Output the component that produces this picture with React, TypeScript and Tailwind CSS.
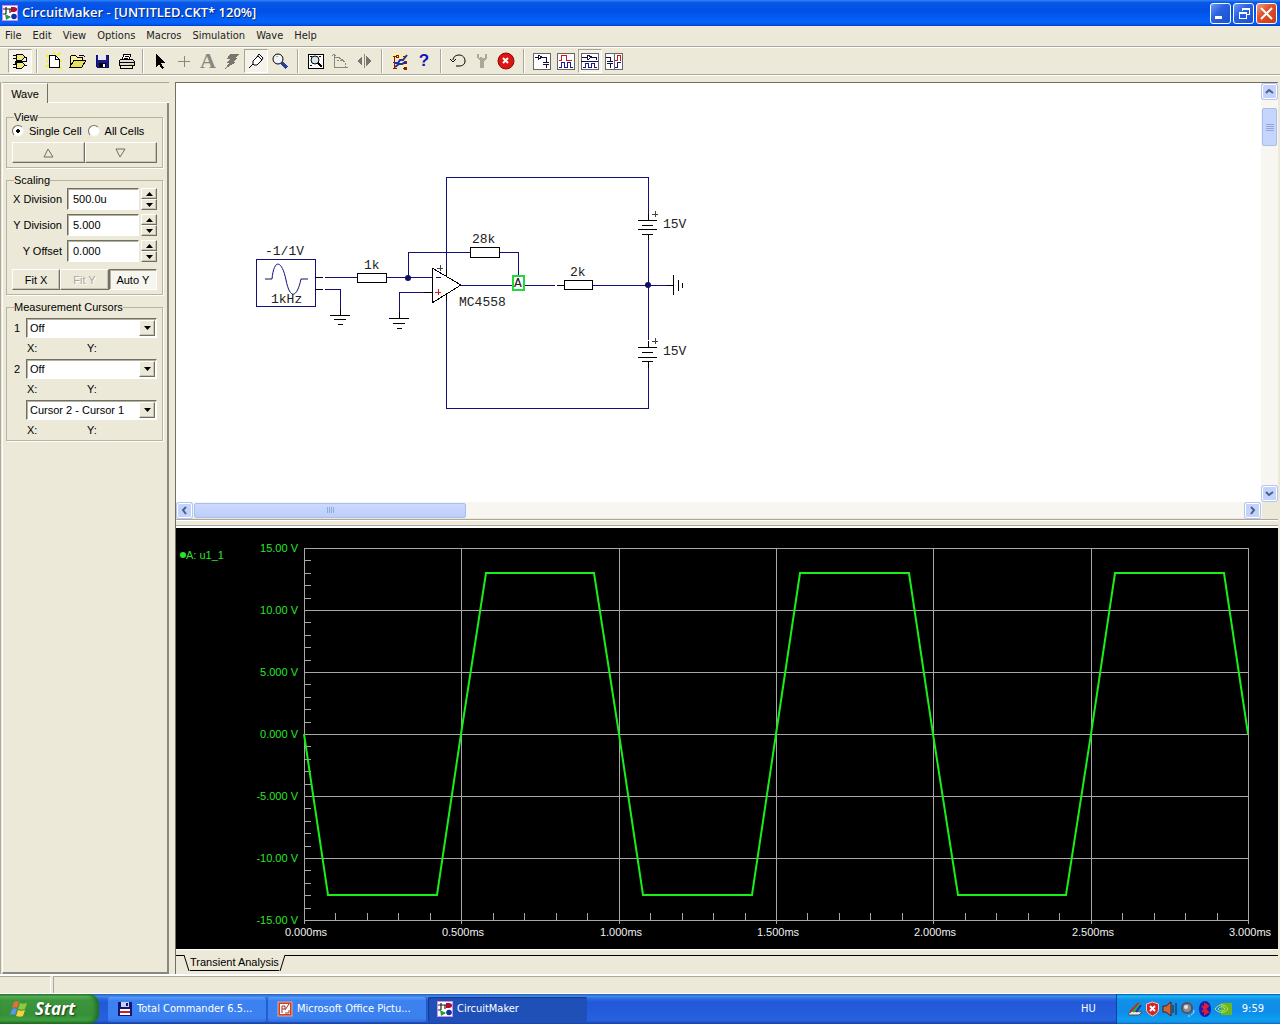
import type { ReactNode } from 'react';

const MENUS = ['File', 'Edit', 'View', 'Options', 'Macros', 'Simulation', 'Wave', 'Help'];

function Pic({ children, size = 18 }: { children: ReactNode; size?: number }) {
  return (
    <svg width={size} height={size} viewBox="0 0 18 18" fill="none" stroke="#000" shapeRendering="crispEdges" className="shrink-0">
      {children}
    </svg>
  );
}

function AppIcon() {
  return (
    <svg width="16" height="16" viewBox="0 0 16 16" fill="none" className="shrink-0">
      <rect width="16" height="16" fill="#fff" />
      <rect x="0.5" y="0.5" width="15" height="15" stroke="#d58be8" />
      <path d="M1 4h9M4 2v7M1 9h3M8 4v4M4 12h4M12 4h3" stroke="#222" strokeWidth="1.2" />
      <path d="M9 2h3c2 0 3 1 3 2.500s-1 2.500-3 2.500H9z" fill="#b01030" />
      <circle cx="12" cy="11.500" r="2.800" fill="#1430a8" />
      <path d="M3 9l6 3-5 3z" fill="#2a9a40" />
    </svg>
  );
}

const ICONS: Record<string, ReactNode> = {
  gates: (
    <Pic>
      <path d="M2 3h3M2 6h3M13 5h3M2 12h3M2 15h3M13 13h3M15 5v4M4 9h12M4 9v3" />
      <path d="M5 2h6l3 3-3 3H5zM5 10h6l3 3-3 3H5z" fill="#f0e978" />
    </Pic>
  ),
  blank: (
    <Pic>
      <path d="M1 3l3 2M15 1l-3 3M1 15l3-2M17 9h-3M1 9h2M9 0v2M14 15l3 2" stroke="#f5ee3c" strokeWidth="2" />
      <path d="M4 3h6l4 4v8H4z" fill="#fff" />
      <path d="M10 3v4h4" />
    </Pic>
  ),
  open: (
    <Pic>
      <path d="M1 15V5l2-2h3l2 2h5v3" fill="#f7f29a" />
      <path d="M1 15L5 8h12l-4 7z" fill="#e8df5c" />
      <path d="M10 3h4l2 2" />
    </Pic>
  ),
  save: (
    <Pic>
      <path d="M3 3h12v12H4l-1-1z" fill="#1a1a8c" stroke="#10106c" />
      <rect x="5" y="3" width="8" height="5" fill="#e8e8f0" stroke="none" />
      <rect x="6" y="11" width="7" height="4" fill="#000" stroke="none" />
      <rect x="10" y="12" width="2" height="3" fill="#fff" stroke="none" />
    </Pic>
  ),
  print: (
    <Pic>
      <path d="M5 8l2-6h7l-2 6z" fill="#fff" />
      <path d="M2 9l2-2h11l2 2v4H2z" fill="#e0ddd0" />
      <path d="M2 10h15M3 13v3h12v-3M8 4h4M7 6h4" />
      <path d="M12 12h3" stroke="#d8cf30" />
    </Pic>
  ),
  arrow: (
    <Pic>
      <path d="M5 2v13l3-3 3 5 2-1-3-5h4z" fill="#000" stroke="none" />
    </Pic>
  ),
  plus: (
    <Pic>
      <path d="M9 4v11M3 9h12" stroke="#8a887c" />
    </Pic>
  ),
  bolt: (
    <Pic>
      <path d="M7 2h9l-4 4h3l-5 4h3L2 17l4-6H3l4-4H4z" fill="#77756c" stroke="none" />
    </Pic>
  ),
  probe: (
    <Pic>
      <path d="M2 16l4-4" />
      <path d="M6 12V9l5-5 4 4-5 5H7zM10 5l2-3 4 4-2 3" fill="#fff" shapeRendering="auto" />
    </Pic>
  ),
  zoom: (
    <Pic>
      <circle cx="7" cy="7" r="5" fill="#f2f4f8" shapeRendering="auto" />
      <path d="M11 11l5 5" stroke="#2a3ea8" strokeWidth="3" />
      <path d="M5 5l2-1" stroke="#9ab" />
    </Pic>
  ),
  fit: (
    <Pic>
      <rect x="1" y="2" width="15" height="14" fill="#fff" />
      <circle cx="8" cy="8" r="4" fill="#d7e8ea" shapeRendering="auto" />
      <path d="M11 11l4 4" strokeWidth="2" />
      <path d="M3 4h2M3 13h2M12 4h2" />
    </Pic>
  ),
  rotate: (
    <Pic>
      <path d="M3 2v13M1 4l2-2 2 2M3 15h14M3 5h4l6 4" stroke="#8a887c" />
      <path d="M6 8h3c4 0 6 3 6 7" stroke="#8a887c" strokeDasharray="2 1" />
    </Pic>
  ),
  mirror: (
    <Pic>
      <path d="M7 4v10L2 9zM11 4v10l5-5z" fill="#77756c" stroke="none" />
      <path d="M9 2v14" stroke="#8a887c" />
    </Pic>
  ),
  nets: (
    <Pic>
      <rect x="1" y="1" width="15" height="15" fill="#f7efb0" stroke="none" />
      <path d="M3 4v12M2 4h4M2 10h4M2 16h4M12 4h3M12 10h3M12 16h3" stroke="#8c1a10" />
      <path d="M5 3h2v2H5zM13 9h2v2h-2zM13 15h2v2h-2z" stroke="#8c1a10" />
      <path d="M3 11h4l2-3h3l4-5M4 15l4-3h3l4-2" stroke="#2030b0" strokeWidth="2" shapeRendering="auto" />
    </Pic>
  ),
  undo: (
    <Pic>
      <path d="M4 8c0-3 3-5 6-5 4 0 6 3 6 6s-2 5-6 5H7M1 7l3 3 3-3" shapeRendering="auto" />
    </Pic>
  ),
  tool: (
    <Pic>
      <path d="M4 2v4l3 3v7h4V9l3-3V2h-2v4H9V5H7v1H6V2z" fill="#aaa89c" stroke="none" />
    </Pic>
  ),
  stop: (
    <svg width="18" height="18" viewBox="0 0 18 18">
      <circle cx="9" cy="9" r="8" fill="#dc1414" stroke="#8c0a0a" />
      <path d="M6 6l5 5M11 6l-5 5" stroke="#fff" strokeWidth="2" />
    </svg>
  ),
  circuitWin: (
    <Pic>
      <rect x="0" y="1" width="17" height="16" fill="#fff" stroke="#666" />
      <path d="M2 5h3M5 3v5l4-3zM9 5h4v5M10 10h6M10 12h6M13 12v4" stroke="#101040" />
    </Pic>
  ),
  waveWin: (
    <Pic>
      <rect x="0" y="1" width="17" height="16" fill="#fff" stroke="#666" />
      <path d="M2 8h2V3h5v5h6" stroke="#d01818" />
      <path d="M2 15h2v-5h3v5h3v-5h3v5h3" stroke="#1a1a8c" />
    </Pic>
  ),
  splitH: (
    <Pic>
      <rect x="0" y="1" width="17" height="16" fill="#fff" stroke="#666" />
      <path d="M1 5h5M6 3v5l5-3zM11 5h4v3M0 9h17" stroke="#101040" />
      <path d="M2 15h2v-4h3v4h3v-4h3v4h3" stroke="#1a1a8c" />
    </Pic>
  ),
  splitV: (
    <Pic>
      <rect x="0" y="1" width="17" height="16" fill="#fff" stroke="#666" />
      <path d="M9 1v16" stroke="#666" />
      <path d="M1 5h4v4M2 9h6M2 11h6M5 11v5" stroke="#101040" />
      <path d="M10 8h2V3h3v5h1" stroke="#d01818" />
      <path d="M10 15h2v-5h4" stroke="#1a1a8c" />
    </Pic>
  ),
};

function Tool({ name, pressed }: { name: string; pressed?: boolean }) {
  return (
    <button
      type="button"
      aria-label={name}
      className={[
        'flex h-6 w-6 shrink-0 items-center justify-center',
        pressed ? 'border border-t-[#a8a595] border-l-[#a8a595] border-r-white border-b-white bg-[#f4f2ea]' : '',
      ].join(' ')}
    >
      {ICONS[name]}
    </button>
  );
}

function Sep({ wide }: { wide?: boolean }) {
  return (
    <div className={['h-6 w-[2px] shrink-0 border-l border-[#aca899] bg-white', wide ? 'mx-[5px]' : 'mx-1'].join(' ')} />
  );
}

function Etch() {
  return <div className="h-[2px] shrink-0 border-t border-[#aca899] bg-white" />;
}

function TitleBar() {
  const btn = 'flex h-[21px] w-[21px] items-center justify-center rounded-[3px] border border-white';
  return (
    <header className="flex h-[26px] shrink-0 items-center bg-[linear-gradient(180deg,#2f86f5,#0a56e6_10%,#0050e6_40%,#0464fb_85%,#0258ee_93%,#003dd0)] pr-[3px] pl-[2px]">
      <AppIcon />
      <h1 className="ml-1 flex-1 truncate font-['Open_Sans','Noto_Sans',sans-serif] text-[13px] font-semibold text-white [text-shadow:1px_1px_#0a246a]">
        CircuitMaker - [UNTITLED.CKT* 120%]
      </h1>
      <div className="flex gap-[2px]">
        <button type="button" aria-label="Minimize" className={`${btn} bg-[linear-gradient(135deg,#6f9af5,#2a62e0_40%,#1c4fcf)]`}>
          <span className="mt-2 mr-1 h-[3px] w-[7px] bg-white" />
        </button>
        <button type="button" aria-label="Restore" className={`${btn} bg-[linear-gradient(135deg,#6f9af5,#2a62e0_40%,#1c4fcf)]`}>
          <svg width="12" height="12" viewBox="0 0 12 12" fill="none" stroke="#fff" shapeRendering="crispEdges">
            <path d="M4 4V1h7v6H8M4 2h7M1 5h7v6H1zM1 6h7" />
          </svg>
        </button>
        <button type="button" aria-label="Close" className={`${btn} bg-[linear-gradient(135deg,#f0a088,#e0512c_40%,#c83a14)]`}>
          <svg width="13" height="13" viewBox="0 0 13 13" stroke="#fff" strokeWidth="2">
            <path d="M1 1l11 11M12 1L1 12" />
          </svg>
        </button>
      </div>
    </header>
  );
}

function Toolbar() {
  return (
    <div className="flex h-[26px] shrink-0 items-center pl-2">
      <Tool name="gates" pressed />
      <Sep />
      <Tool name="blank" />
      <Tool name="open" />
      <Tool name="save" />
      <Tool name="print" />
      <Sep />
      <Tool name="arrow" />
      <Tool name="plus" />
      <button type="button" className="h-6 w-6 font-['Liberation_Serif',serif] text-[22px] leading-6 font-bold text-[#8a887c]">A</button>
      <Tool name="bolt" />
      <Tool name="probe" pressed />
      <Tool name="zoom" />
      <Sep wide />
      <Tool name="fit" />
      <Tool name="rotate" />
      <Tool name="mirror" />
      <Sep wide />
      <Tool name="nets" />
      <button type="button" className="h-6 w-6 font-['Liberation_Sans',sans-serif] text-[17px] leading-6 font-bold text-[#1414b4]">?</button>
      <Sep />
      <Tool name="undo" />
      <Tool name="tool" />
      <Tool name="stop" />
      <Sep wide />
      <Tool name="circuitWin" />
      <Tool name="waveWin" />
      <Tool name="splitH" pressed />
      <Tool name="splitV" />
    </div>
  );
}

const raised = 'border border-t-white border-l-white border-r-[#716f64] border-b-[#716f64] shadow-[inset_-1px_-1px_#c9c5b2]';
const sunken = 'border border-t-[#716f64] border-l-[#716f64] border-r-white border-b-white shadow-[inset_1px_1px_#b5b19f]';

function Group({ title, children }: { title: string; children: ReactNode }) {
  return (
    <fieldset className="min-w-0 border border-[#b8b4a2] px-[5px] pb-1 shadow-[1px_1px_#fff]">
      <legend className="ml-[2px] bg-[#ece9d8] leading-3">{title}</legend>
      {children}
    </fieldset>
  );
}

function SpinRow({ id, label, value }: { id: string; label: string; value: string }) {
  return (
    <div className="flex h-[22px] items-center">
      <label htmlFor={id} className="w-[50px] shrink-0 text-right whitespace-nowrap">{label}</label>
      <input id={id} defaultValue={value} className={`ml-[5px] h-[22px] w-0 min-w-0 flex-1 bg-white pl-[5px] ${sunken}`} />
      <div className="ml-[2px] flex h-[22px] w-4 shrink-0 flex-col">
        <button type="button" aria-label={`${label} up`} className={`flex flex-1 items-center justify-center ${raised}`}>
          <svg width="7" height="4" viewBox="0 0 7 4"><path d="M0 4l3.500-4L7 4z" /></svg>
        </button>
        <button type="button" aria-label={`${label} down`} className={`flex flex-1 items-center justify-center ${raised}`}>
          <svg width="7" height="4" viewBox="0 0 7 4"><path d="M0 0l3.500 4L7 0z" /></svg>
        </button>
      </div>
    </div>
  );
}

function CursorRow({ id, label, value }: { id: string; label: string; value: string }) {
  return (
    <div className="mb-[5px] last:mb-0">
      <div className="flex h-5 items-center">
        <label htmlFor={id} className="w-[14px] pl-[2px]">{label}</label>
        <div className="relative h-5 flex-1">
          <select id={id} aria-label={label || value} className={`h-5 w-full appearance-none bg-white pl-[3px] ${sunken}`}>
            <option>{value}</option>
          </select>
          <span className={`pointer-events-none absolute top-[2px] right-[2px] flex h-4 w-4 items-center justify-center bg-[#ece9d8] ${raised}`}>
            <svg width="7" height="4" viewBox="0 0 7 4"><path d="M0 0l3.500 4L7 0z" /></svg>
          </span>
        </div>
      </div>
      <div className="mt-1 flex leading-3">
        <span className="ml-[15px] w-[60px]">X:</span>
        <span>Y:</span>
      </div>
    </div>
  );
}

function Radio({ label, checked }: { label: string; checked?: boolean }) {
  return (
    <label className="flex items-center whitespace-nowrap">
      <input
        type="radio"
        name="cells"
        defaultChecked={checked}
        className="mr-[5px] h-3 w-3 appearance-none rounded-full border border-t-[#716f64] border-r-[#f1efe2] border-b-[#f1efe2] border-l-[#716f64] bg-white checked:bg-[radial-gradient(circle,#000_2px,#fff_2px)]"
      />
      {label}
    </label>
  );
}

function Sidebar() {
  return (
    <aside className="flex w-[169px] shrink-0 flex-col border-l border-[#aca899] pl-px font-['Liberation_Sans',Arial,sans-serif] text-[11px] leading-3 text-black">
      <div className="flex h-[21px] shrink-0 border-t border-[#aca899]">
        <button type="button" className="w-[46px] border-t border-r border-l border-t-white border-r-[#716f64] border-l-white">Wave</button>
        <div className="flex-1 border-b border-white" />
      </div>
      <div className="flex flex-1 flex-col gap-[6px] border-r-2 border-b-2 border-l border-r-[#8a887c] border-b-[#8a887c] border-l-white pt-2 pr-1 pl-[3px]">
        <Group title="View">
          <div className="mt-[2px] flex gap-[6px]">
            <Radio label="Single Cell" checked />
            <Radio label="All Cells" />
          </div>
          <div className="mt-[5px] flex">
            <button type="button" aria-label="Previous cell" className={`flex h-[21px] flex-1 items-center justify-center ${raised}`}>
              <svg width="11" height="10" viewBox="0 0 11 10" fill="none" stroke="#716f64"><path d="M1 9l4-8 5 8z" /></svg>
            </button>
            <button type="button" aria-label="Next cell" className={`flex h-[21px] flex-1 items-center justify-center ${raised}`}>
              <svg width="11" height="10" viewBox="0 0 11 10" fill="none" stroke="#716f64"><path d="M1 1l4 8 5-8z" /></svg>
            </button>
          </div>
        </Group>
        <Group title="Scaling">
          <div className="mt-[2px] flex flex-col gap-1">
            <SpinRow id="xdiv" label="X Division" value="500.0u" />
            <SpinRow id="ydiv" label="Y Division" value="5.000" />
            <SpinRow id="yoff" label="Y Offset" value="0.000" />
          </div>
          <div className="mt-[7px] flex">
            <button type="button" className={`h-[21px] flex-1 ${raised}`}>Fit X</button>
            <button type="button" disabled className={`h-[21px] flex-1 text-[#aca899] [text-shadow:1px_1px_#fff] ${raised}`}>Fit Y</button>
            <button type="button" className={`h-[21px] flex-1 bg-[#f6f5ee] ${sunken}`}>Auto Y</button>
          </div>
        </Group>
        <Group title="Measurement Cursors">
          <div className="mt-[5px]">
            <CursorRow id="cur1" label="1" value="Off" />
            <CursorRow id="cur2" label="2" value="Off" />
            <CursorRow id="cur3" label="" value="Cursor 2 - Cursor 1" />
          </div>
        </Group>
      </div>
    </aside>
  );
}

function ScrollButton({ label, d }: { label: string; d: string }) {
  return (
    <button type="button" aria-label={label} className="flex h-[15px] w-[15px] shrink-0 items-center justify-center rounded-[2px] border border-white bg-[#c3d3fb] shadow-[0_0_0_1px_#b4c6f0]">
      <svg width="9" height="9" viewBox="0 0 9 9" fill="none" stroke="#4d6185" strokeWidth="2"><path d={d} /></svg>
    </button>
  );
}

// drawing units are window pixels, origin at the sheet's top-left corner
function Circuit() {
  return (
    <svg width="640" height="400" viewBox="176 83 640 400" fill="none" shapeRendering="crispEdges" className="block max-w-full">
      <g stroke="#101078">
        <rect x="256" y="259" width="59" height="47" />
        <path d="M265 279h7C274 258 282 260 286 280S297 298 301 279h7" shapeRendering="auto" />
        <path d="M325 277h32M387 277h45M325 289h15v20M408 277v-25h62M499 252h19v24M399 312v-20h25" />
        <path d="M446 269v-92h202v37M446 301v107h202v-40M648 240v100M461 285h52M525 285h30M592 285h75M436 277h5" />
      </g>
      <g stroke="#000">
        <path d="M315 277h8M315 289h8M340 309v6M424 292h8M446 269v8M446 294v7M648 214v6M648 234v6M648 341v6M648 361v7M557 285h7M667 285h6M399 312v6" />
        <rect x="357" y="273" width="29" height="9" />
        <rect x="470" y="247" width="29" height="10" />
        <rect x="564" y="280" width="28" height="9" />
        <path d="M432 268v35l29-18z" />
        <path d="M330 315h20M334 319h12M338 324h5" />
        <path d="M389 318h20M393 323h12M397 328h5" />
        <path d="M638 220h19M642 225h11M638 229h19M642 234h11" />
        <path d="M638 347h19M642 352h11M638 357h19M642 361h11" />
        <path d="M673 275v20M678 280v11M682 283v5" />
      </g>
      <path d="M437 268h6M440 265v6M652 214h6M655 211v6M652 341h6M655 338v6" stroke="#444" />
      <path d="M435 292h6M438 289v6" stroke="#e01818" />
      <g fill="#101060" shapeRendering="auto">
        <circle cx="408" cy="278" r="3" />
        <circle cx="648" cy="285" r="3" />
      </g>
      <rect x="513" y="276" width="11" height="14" stroke="#22d83a" strokeWidth="2" />
      <g fill="#222" className="font-['Liberation_Mono',monospace] text-[13px]">
        <text x="265" y="255">-1/1V</text>
        <text x="271" y="303">1kHz</text>
        <text x="364" y="269">1k</text>
        <text x="472" y="243">28k</text>
        <text x="570" y="276">2k</text>
        <text x="459" y="306">MC4558</text>
        <text x="663" y="228">15V</text>
        <text x="663" y="355">15V</text>
        <text x="514" y="287">A</text>
      </g>
    </svg>
  );
}

function Schematic() {
  return (
    <section aria-label="Schematic" className="flex min-h-0 flex-[435_1_0px] flex-col border-t border-[#716f64]">
      <div className="flex min-h-0 flex-1">
        <div className="min-w-0 flex-1 overflow-hidden bg-white">
          <Circuit />
        </div>
        <div className="flex w-[17px] flex-col items-center bg-[#f7f6f1] py-px">
          <ScrollButton label="Scroll up" d="M1 6l3-3 4 3" />
          <div className="mt-[9px] flex h-[38px] w-[15px] flex-col items-center justify-center gap-px rounded-[2px] border border-[#a9bdf0] bg-[#c6d5fc]">
            {[0, 1, 2, 3].map((i) => (
              <span key={i} className="h-px w-2 border-b border-[#8fa8e0] bg-white" />
            ))}
          </div>
          <div className="flex-1" />
          <ScrollButton label="Scroll down" d="M1 3l3 3 4-3" />
        </div>
      </div>
      <div className="flex h-4 shrink-0 items-center bg-[#f7f6f1] pl-px">
        <ScrollButton label="Scroll left" d="M6 1L3 4l3 4" />
        <div className="ml-[2px] flex h-[15px] w-[272px] items-center justify-center gap-px rounded-[2px] border border-[#a9bdf0] bg-[linear-gradient(#cbd9fd,#bccffa)]">
          {[0, 1, 2, 3].map((i) => (
            <span key={i} className="h-[6px] w-px bg-[#8fa8e0]" />
          ))}
        </div>
        <div className="flex-1" />
        <ScrollButton label="Scroll right" d="M3 1l3 3-3 4" />
        <div className="ml-[2px] h-4 w-4 bg-[#ece9d8]" />
      </div>
    </section>
  );
}

const PLOT = { left: 128, top: 20, width: 944, height: 372 };
const VOLTS = ['15.00 V', '10.00 V', '5.000 V', '0.000 V', '-5.000 V', '-10.00 V', '-15.00 V'];
const TIMES = ['0.000ms', '0.500ms', '1.000ms', '1.500ms', '2.000ms', '2.500ms', '3.000ms'];

const px = (ms: number) => Math.round(PLOT.left + (ms / 3) * PLOT.width);
const py = (v: number) => Math.round(PLOT.top + ((15 - v) / 30) * PLOT.height);

function tracePoints() {
  const pts: string[] = [`${px(0)},${py(0)}`];
  for (let k = 0; k < 3; k++) {
    for (const [t, v] of [[0.077, -13], [0.423, -13], [0.5, 0], [0.577, 13], [0.923, 13], [1, 0]]) {
      pts.push(`${px(k + t)},${py(v)}`);
    }
  }
  return pts.join(' ');
}

function WavePlot() {
  const right = PLOT.left + PLOT.width;
  const bottom = PLOT.top + PLOT.height;
  return (
    <section aria-label="Waveform" className="min-h-0 flex-[421_1_0px] bg-black">
      <svg viewBox="0 0 1102 421" className="block h-full w-full font-['Liberation_Sans',Arial,sans-serif] text-[11px]">
        <g stroke="#a8a8a8" shapeRendering="crispEdges">
          {TIMES.map((t, i) => (
            <line key={t} x1={px(i / 2)} x2={px(i / 2)} y1={PLOT.top} y2={bottom + 4} />
          ))}
          {VOLTS.map((v, i) => (
            <line key={v} x1={PLOT.left} x2={right} y1={py(15 - i * 5)} y2={py(15 - i * 5)} />
          ))}
          {Array.from({ length: 31 }, (_, i) => (
            <line key={`v${i}`} x1={PLOT.left} x2={PLOT.left + 7} y1={py(15 - i)} y2={py(15 - i)} />
          ))}
          {Array.from({ length: 31 }, (_, i) => (
            <line key={`t${i}`} x1={px(i / 10)} x2={px(i / 10)} y1={bottom - 7} y2={bottom} />
          ))}
        </g>
        <polyline points={tracePoints()} fill="none" stroke="#18ee18" strokeWidth="2" />
        <g fill="#2be52b">
          <circle cx="7" cy="27" r="3" />
          <text x="10" y="31">A: u1_1</text>
          {VOLTS.map((v, i) => (
            <text key={v} x="122" y={py(15 - i * 5) + 4} textAnchor="end">{v}</text>
          ))}
        </g>
        <g fill="#f0f0f0" textAnchor="middle">
          {TIMES.map((t, i) => (
            <text key={t} x={px(i / 2) + 2} y={bottom + 16}>{t}</text>
          ))}
        </g>
      </svg>
    </section>
  );
}

function SheetTabs() {
  return (
    <div className="h-[25px] shrink-0 border-t border-white pt-[5px]">
      <div className="flex h-4 font-['Liberation_Sans',Arial,sans-serif] text-[11px] text-black">
        <div className="w-2 border-t border-black" />
        <svg width="6" height="16" viewBox="0 0 6 16" fill="none" stroke="#000"><path d="M0 0l5 16" /></svg>
        <button type="button" className="border-b border-black leading-[15px]">Transient Analysis</button>
        <svg width="6" height="16" viewBox="0 0 6 16" fill="none" stroke="#000"><path d="M6 0L1 16" /></svg>
        <div className="flex-1 border-t border-black" />
      </div>
    </div>
  );
}

function TaskButton({ icon, text, active }: { icon: ReactNode; text: string; active?: boolean }) {
  return (
    <button
      type="button"
      className={[
        'flex h-[25px] max-w-[159px] min-w-0 flex-1 items-center gap-1 rounded-[2px] pl-[9px] text-white',
        active
          ? 'bg-[#1e50b8] shadow-[inset_1px_1px_1px_#153a8c]'
          : 'bg-[linear-gradient(#5a9bf8,#3c81f0_15%,#3c81f0_85%,#2f6cda)] shadow-[inset_-1px_0_#2459c4]',
      ].join(' ')}
    >
      {icon}
      <span className="whitespace-nowrap">{text}</span>
    </button>
  );
}

function Tray() {
  return (
    <div className="flex h-full items-center gap-[2px] border-l border-[#0f3f9c] bg-[linear-gradient(#0c59b9_1%,#139ee9_4%,#18b5f2_10%,#139beb_15%,#1290e8_20%,#0d8dea_63%,#0d9ff1_81%,#119be9_91%,#137ed7_97%,#095bc9)] pr-4 pl-[10px] text-white">
      <svg width="16" height="16" viewBox="0 0 16 16" fill="none">
        <path d="M1 13l4-3 10 1-3 3H2z" fill="#e8e8e8" stroke="#555" />
        <path d="M3 11L12 2" stroke="#d02020" strokeWidth="2" />
        <path d="M6 11l7-8" stroke="#20b040" strokeWidth="2" />
        <path d="M9 11l5-7" stroke="#2030c0" strokeWidth="2" />
      </svg>
      <svg width="15" height="16" viewBox="0 0 15 16">
        <path d="M7.500 1l6 2v5c0 3-2 5-6 7-4-2-6-4-6-7V3z" fill="#d42424" stroke="#f0c8c8" />
        <path d="M5 5l5 5M10 5l-5 5" stroke="#fff" strokeWidth="2" />
      </svg>
      <svg width="16" height="16" viewBox="0 0 16 16" fill="none">
        <path d="M1 5h3l5-4v14l-5-4H1z" fill="#c8683c" stroke="#4c1c0c" />
        <path d="M11 4v8M14 2v12" stroke="#222" />
      </svg>
      <svg width="16" height="16" viewBox="0 0 16 16" fill="none">
        <circle cx="7" cy="7" r="5" fill="#8a8e94" stroke="#50545c" strokeWidth="2" />
        <circle cx="6" cy="6" r="2" fill="#e4e6ea" />
        <path d="M11 14c2-1 3-2 3-5M8 15h2" stroke="#c8dcf8" />
      </svg>
      <svg width="14" height="16" viewBox="0 0 14 16">
        <ellipse cx="7" cy="8" rx="6" ry="8" fill="#1020b4" />
        <path d="M4 5l6 6-3 2V3l3 2-6 6" stroke="#e01c30" strokeWidth="2" fill="none" />
      </svg>
      <svg width="18" height="12" viewBox="0 0 18 12" fill="none">
        <path d="M7 0h11v12H7z" fill="#6cb81c" />
        <path d="M1 6c4-6 10-5 13 0-3 4-9 5-13 0zM4 6c2-3 6-3 7 0-2 3-5 2-7 0z" stroke="#b4e46c" />
      </svg>
      <time className="ml-2">9:59</time>
    </div>
  );
}

function Taskbar() {
  return (
    <footer className="flex h-[30px] shrink-0 items-center bg-[linear-gradient(#2a5cc0,#3f8ae8_8%,#2b6be0_16%,#2258d8_28%,#245ddb_60%,#2562df_88%,#1d4ec0_95%,#1941a5)] font-['DejaVu_Sans_Condensed','Noto_Sans',sans-serif] text-[11px]">
      <button
        type="button"
        className="flex h-full w-[99px] items-center rounded-r-[10px] bg-[linear-gradient(#2e7c2e,#5cb45c_8%,#3c963c_20%,#378f37_70%,#3fa03f_88%,#226c22)] pl-[10px] shadow-[inset_-3px_0_4px_#1f6a1f]"
      >
        <svg width="19" height="18" viewBox="0 0 19 18">
          <path d="M4 2c2-1 4-1 5 0L7 8c-1-1-3-1-5 0z" fill="#ee6a3a" />
          <path d="M10 3c2 1 4 1 7 0l-2 6c-2 1-4 1-7 0z" fill="#8ccc3c" />
          <path d="M2 9c2-1 4-1 5 0l-2 6c-1-1-3-1-5 0z" fill="#5c92f4" />
          <path d="M8 10c2 1 4 1 7 0l-2 6c-2 1-4 1-7 0z" fill="#f8d03c" />
        </svg>
        <span className="ml-[6px] font-['Open_Sans','Noto_Sans',sans-serif] text-[17px] leading-6 font-bold text-white italic [text-shadow:1px_1px_2px_#123c12]">Start</span>
      </button>
      <nav aria-label="Windows" className="ml-[9px] flex min-w-0 flex-1 gap-px">
        <TaskButton
          text="Total Commander 6.5..."
          icon={
            <svg width="16" height="16" viewBox="0 0 16 16" className="shrink-0">
              <path d="M1 1h14v14H1z" fill="#14147c" />
              <path d="M4 1h8v5H4z" fill="#c8d0e8" />
              <path d="M9 2h2v3H9z" fill="#14147c" />
              <path d="M3 8h10v6H3z" fill="#fff" />
              <path d="M3 10h10v2H3z" fill="#d02020" />
            </svg>
          }
        />
        <TaskButton
          text="Microsoft Office Pictu..."
          icon={
            <svg width="16" height="16" viewBox="0 0 16 16" fill="none" className="shrink-0">
              <rect x="1" y="1" width="14" height="14" fill="#c4452c" stroke="#f0a890" />
              <rect x="3" y="3" width="10" height="10" fill="#fff" />
              <path d="M5 12V5h3v3H5M12 3l-4 6M8 12h4V9" stroke="#a83020" />
            </svg>
          }
        />
        <TaskButton text="CircuitMaker" icon={<AppIcon />} active />
      </nav>
      <span className="mr-5 text-white">HU</span>
      <Tray />
    </footer>
  );
}

export default function App() {
  return (
    <div className="flex h-screen w-full flex-col overflow-hidden bg-[#ece9d8]">
      <TitleBar />
      <nav className="flex h-5 shrink-0 items-center gap-[11px] pl-[5px] font-['DejaVu_Sans_Condensed','Noto_Sans',sans-serif] text-[11px] leading-4 text-[#222]">
        {MENUS.map((m) => (
          <button key={m} type="button">{m}</button>
        ))}
      </nav>
      <Etch />
      <Toolbar />
      <Etch />
      <main className="mt-[6px] flex min-h-0 flex-1">
        <Sidebar />
        <div className="ml-[6px] flex min-w-0 flex-1 flex-col border-l border-[#716f64] pr-[2px]">
          <Schematic />
          <div className="flex h-[10px] shrink-0 flex-col justify-between border-b-2 border-white pt-px">
            <Etch />
            <div className="h-px bg-[#aca899]" />
          </div>
          <WavePlot />
          <SheetTabs />
        </div>
      </main>
      <div className="flex h-5 shrink-0 gap-[2px] border-t-2 border-b border-white">
        <div className="w-[51px] border-t border-r border-t-[#aca899] border-r-white" />
        <div className="flex-1 border-t border-l border-[#aca899]" />
      </div>
      <Taskbar />
    </div>
  );
}
